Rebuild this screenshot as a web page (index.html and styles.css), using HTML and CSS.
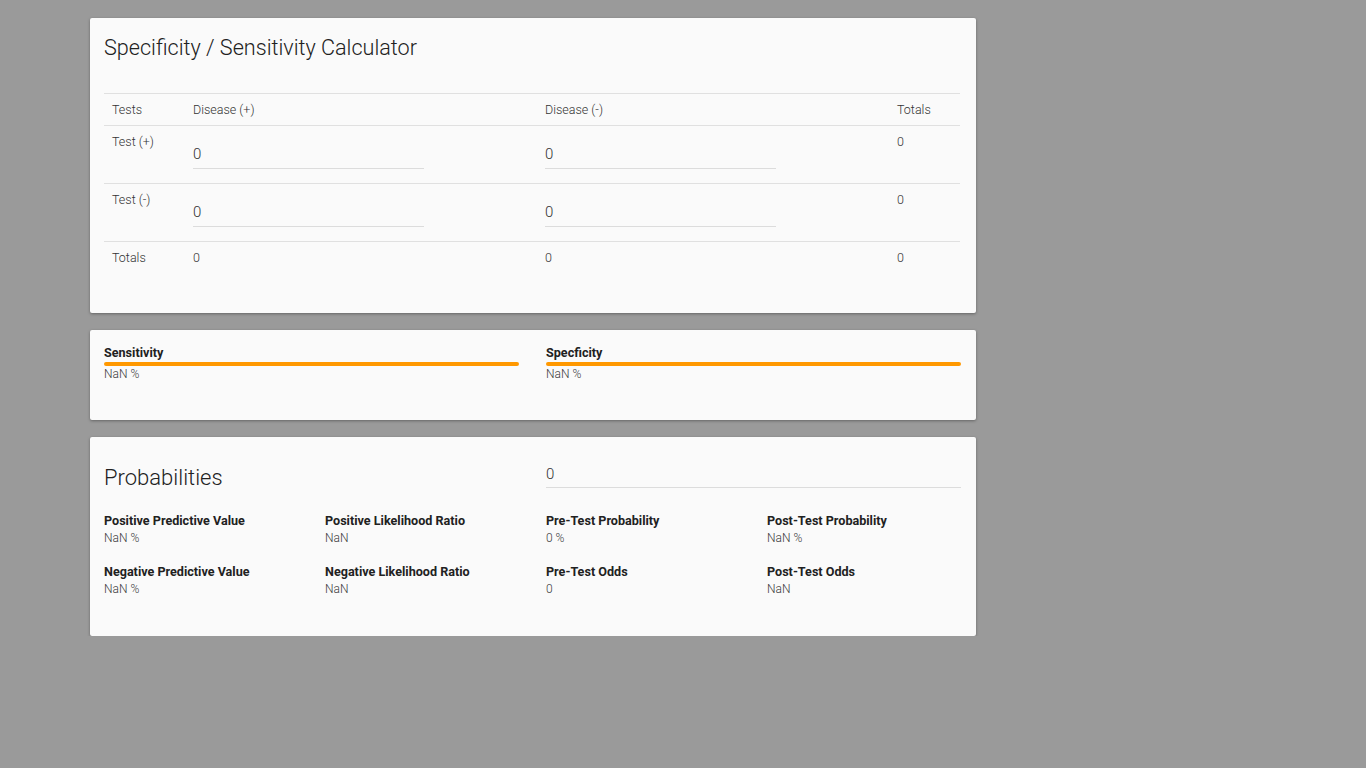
FILE: index.html
```html
<!DOCTYPE html>
<html>
<head>
<meta charset="utf-8">
<link rel="stylesheet" href="styles.css">
</head>
<body>
<main class="page">
  <section class="card card-table">
    <h1 class="title">Specificity / Sensitivity Calculator</h1>
    <table class="grid">
      <colgroup><col class="c1"><col class="c2"><col class="c3"><col class="c4"></colgroup>
      <thead>
        <tr class="head"><th>Tests</th><th>Disease (+)</th><th>Disease (-)</th><th>Totals</th></tr>
      </thead>
      <tbody>
        <tr class="in-row">
          <td>Test (+)</td>
          <td><input class="field" type="text" value="0"></td>
          <td><input class="field" type="text" value="0"></td>
          <td>0</td>
        </tr>
        <tr class="in-row">
          <td>Test (-)</td>
          <td><input class="field" type="text" value="0"></td>
          <td><input class="field" type="text" value="0"></td>
          <td>0</td>
        </tr>
        <tr class="tot-row">
          <td>Totals</td><td>0</td><td>0</td><td>0</td>
        </tr>
      </tbody>
    </table>
  </section>

  <section class="card card-bars">
    <div class="bar-item">
      <div class="lbl">Sensitivity</div>
      <div class="bar"></div>
      <div class="val">NaN %</div>
    </div>
    <div class="bar-item">
      <div class="lbl">Specficity</div>
      <div class="bar"></div>
      <div class="val">NaN %</div>
    </div>
  </section>

  <section class="card card-prob">
    <div class="prob-head">
      <h2 class="sub">Probabilities</h2>
      <input class="field wide" type="text" value="0">
    </div>
    <div class="stats">
      <div class="stat"><div class="lbl">Positive Predictive Value</div><div class="val">NaN %</div></div>
      <div class="stat"><div class="lbl">Positive Likelihood Ratio</div><div class="val">NaN</div></div>
      <div class="stat"><div class="lbl">Pre-Test Probability</div><div class="val">0 %</div></div>
      <div class="stat"><div class="lbl">Post-Test Probability</div><div class="val">NaN %</div></div>
      <div class="stat"><div class="lbl">Negative Predictive Value</div><div class="val">NaN %</div></div>
      <div class="stat"><div class="lbl">Negative Likelihood Ratio</div><div class="val">NaN</div></div>
      <div class="stat"><div class="lbl">Pre-Test Odds</div><div class="val">0</div></div>
      <div class="stat"><div class="lbl">Post-Test Odds</div><div class="val">NaN</div></div>
    </div>
  </section>
</main>
</body>
</html>
```

FILE: styles.css
```css
html, body {
  margin: 0;
  padding: 0;
  background: #9a9a9a;
  font-family: Roboto, "Liberation Sans", sans-serif;
  font-weight: 300;
  color: #333;
}

.page {
  width: 886px;
  margin-left: 90px;
  padding-top: 18px;
  display: flex;
  flex-direction: column;
  gap: 17px;
}

.card {
  background: #fafafa;
  border-radius: 2px;
  box-shadow: 0 1px 3px rgba(0,0,0,0.35);
  padding: 0 14px;
}

.card-table {
  padding-top: 14px;
  padding-bottom: 39px;
}

.title {
  margin: 0 0 31px;
  padding-top: 1px;
  height: 29px;
  font-size: 21.6px;
  line-height: 30px;
  font-weight: 300;
  color: #212121;
}

.grid {
  width: 856px;
  border-collapse: collapse;
  table-layout: fixed;
  font-size: 12.5px;
  line-height: 16px;
  color: #333;
}

.c1 { width: 81px; }
.c2 { width: 352px; }
.c3 { width: 352px; }
.c4 { width: auto; }

.grid th, .grid td {
  text-align: left;
  vertical-align: top;
  font-weight: 300;
  padding: 0 8px;
}

.grid tr { border-top: 1px solid #e0e0e0; }

.head th {
  padding-top: 8px;
  padding-bottom: 7px;
}

.in-row td {
  padding-top: 8px;
  padding-bottom: 14px;
}

.tot-row td {
  padding-top: 8px;
  padding-bottom: 8px;
}

.field {
  display: block;
  box-sizing: border-box;
  margin: 9px 0 0;
  width: 231px;
  height: 26px;
  padding: 0 0 4px;
  border: none;
  border-bottom: 1px solid #dcdcdc;
  background: transparent;
  font-family: Roboto, "Liberation Sans", sans-serif;
  font-weight: 300;
  font-size: 15px;
  color: #333;
  outline: none;
}

.card-bars {
  display: grid;
  grid-template-columns: 415px 415px;
  column-gap: 27px;
  padding-top: 16px;
  padding-bottom: 38px;
}

.lbl {
  font-size: 12.6px;
  line-height: 14px;
  font-weight: 700;
  color: #212121;
}

.val {
  font-size: 12px;
  line-height: 16px;
  color: #3a3a3a;
}

.bar {
  height: 4px;
  border-radius: 2px;
  background: #ff9800;
  margin-top: 2px;
}

.card-prob {
  padding-top: 25px;
  padding-bottom: 39px;
}

.prob-head {
  display: grid;
  grid-template-columns: 442px 415px;
  align-items: start;
}

.sub {
  margin: 0;
  padding-top: 1px;
  font-size: 22px;
  line-height: 30px;
  font-weight: 300;
  color: #212121;
}

.field.wide {
  width: 415px;
  height: 27px;
  padding-bottom: 1px;
  margin: -1px 0 0;
}

.stats {
  display: grid;
  grid-template-columns: repeat(4, 221px);
  row-gap: 19px;
  margin-top: 21px;
}

.stat .val { margin-top: 2px; }
```
